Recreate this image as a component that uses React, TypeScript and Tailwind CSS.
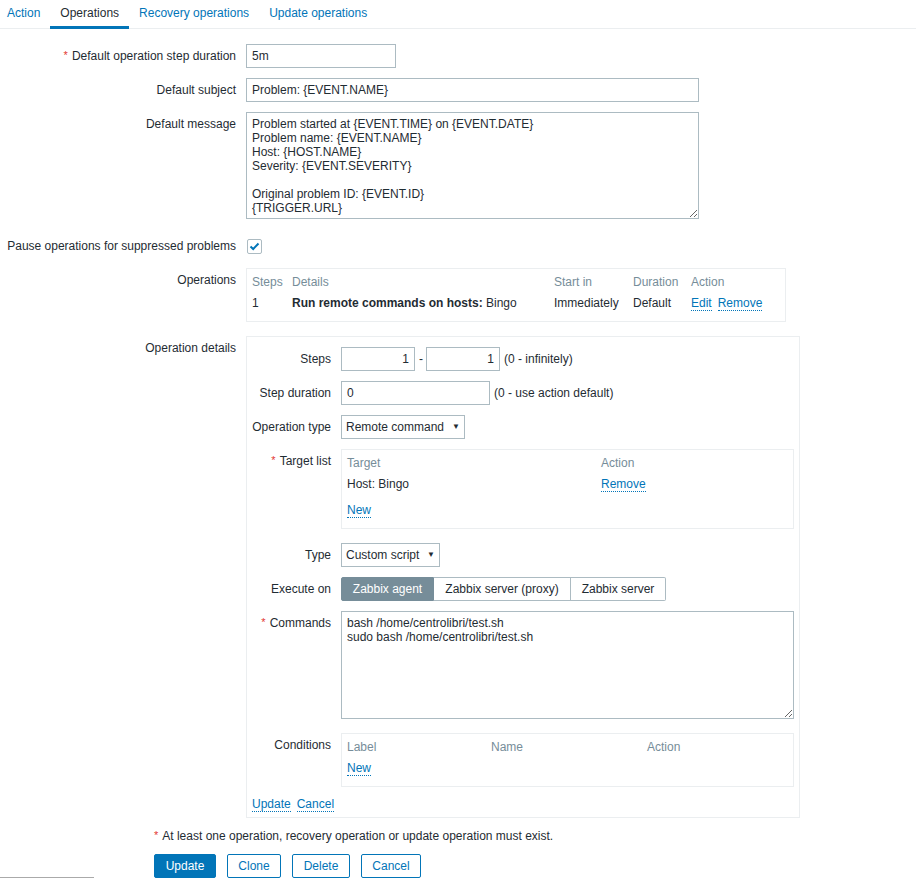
import React from "react";

const font = "font-['Liberation_Sans',Arial,sans-serif]";

function Req() {
  return <span className="text-[#e33734] mr-[4px] text-[11px] relative top-[-1px]">*</span>;
}

function Link({ children }: { children: React.ReactNode }) {
  return (
    <span className="text-[#0275b8] border-b border-dotted border-[#0275b8] leading-[14px] inline-block">
      {children}
    </span>
  );
}

function Row({
  label,
  req,
  width,
  className = "",
  children,
}: {
  label: string;
  req?: boolean;
  width: string;
  className?: string;
  children: React.ReactNode;
}) {
  return (
    <div className={`flex ${className}`}>
      <div className={`${width} shrink-0 text-right leading-[24px] whitespace-nowrap`}>
        {req && <Req />}
        {label}
      </div>
      <div className="ml-[10px] flex-1 min-w-0">{children}</div>
    </div>
  );
}

const inputCls =
  "h-[24px] border border-[#acbbc2] px-[5px] text-[12px] text-[#1f2c33] outline-none bg-white";

function Select({ text, w }: { text: string; w: string }) {
  return (
    <div className={`${w} h-[24px] border border-[#acbbc2] px-[4px] flex items-center justify-between`}>
      <span>{text}</span>
      <span className="text-[8px] text-[#1f2c33]">▼</span>
    </div>
  );
}

export default function App() {
  const msg =
    "Problem started at {EVENT.TIME} on {EVENT.DATE}\nProblem name: {EVENT.NAME}\nHost: {HOST.NAME}\nSeverity: {EVENT.SEVERITY}\n\nOriginal problem ID: {EVENT.ID}\n{TRIGGER.URL}";
  const cmds = "bash /home/centrolibri/test.sh\nsudo bash /home/centrolibri/test.sh";

  return (
    <div className={`${font} text-[12px] text-[#1f2c33] bg-white w-[916px] h-[878px] overflow-hidden`}>
      {/* TABS */}
      <div className="flex h-[29px] border-b border-[#ebeef0]">
        <div className="pl-[7px] pr-[10px] text-[#0275b8] leading-[26px]">Action</div>
        <div className="px-[10px] leading-[26px] border-b-[3px] border-[#0275b8] h-[29px]">Operations</div>
        <div className="px-[10px] text-[#0275b8] leading-[26px]">Recovery operations</div>
        <div className="px-[10px] text-[#0275b8] leading-[26px]">Update operations</div>
      </div>

      {/* FORM */}
      <div className="pt-[15px]">
        <Row label="Default operation step duration" req width="w-[236px]">
          <input readOnly value="5m" className={`${inputCls} w-[150px]`} />
        </Row>
        <Row label="Default subject" width="w-[236px]" className="mt-[10px]">
          <input readOnly value="Problem: {EVENT.NAME}" className={`${inputCls} w-[453px]`} />
        </Row>
        <Row label="Default message" width="w-[236px]" className="mt-[10px]">
          <textarea
            readOnly
            defaultValue={msg}
            className="block w-[453px] h-[107px] border border-[#acbbc2] px-[5px] py-[4px] text-[12px] leading-[14px] text-[#1f2c33] outline-none resize-y"
          />
        </Row>

        <div className="flex items-center mt-[15px] h-[24px]">
          <div className="w-[236px] text-right whitespace-nowrap">Pause operations for suppressed problems</div>
          <div className="ml-[11px] w-[15px] h-[15px] border border-[#acbbc2] rounded-[2px] flex items-center justify-center">
            <svg width="11" height="9" viewBox="0 0 11 9">
              <path d="M1.5 4.5 L4.2 7 L9.5 1.5" fill="none" stroke="#0275b8" strokeWidth="2" />
            </svg>
          </div>
        </div>

        {/* OPERATIONS */}
        <Row label="Operations" width="w-[236px]" className="mt-[10px]">
          <div className="w-[540px] h-[54px] border border-[#ebeef0] pt-[5px]">
            <div className="flex h-[16px] items-center text-[#768d99]">
              <div className="w-[40px] pl-[5px]">Steps</div>
              <div className="w-[262px] pl-[5px]">Details</div>
              <div className="w-[79px] pl-[5px]">Start in</div>
              <div className="w-[58px] pl-[5px]">Duration</div>
              <div className="pl-[5px]">Action</div>
            </div>
            <div className="flex h-[26px] items-center">
              <div className="w-[40px] pl-[5px]">1</div>
              <div className="w-[262px] pl-[5px]">
                <b>Run remote commands on hosts:</b> Bingo
              </div>
              <div className="w-[79px] pl-[5px]">Immediately</div>
              <div className="w-[58px] pl-[5px]">Default</div>
              <div className="pl-[5px] flex gap-[6px]">
                <Link>Edit</Link>
                <Link>Remove</Link>
              </div>
            </div>
          </div>
        </Row>

        {/* OPERATION DETAILS */}
        <Row label="Operation details" width="w-[236px]" className="mt-[14px]">
          <div className="w-[554px] h-[482px] border border-[#ebeef0] pt-[10px]">
            <Row label="Steps" width="w-[84px]">
              <div className="flex items-center">
                <input readOnly value="1" className={`${inputCls} w-[74px] text-right`} />
                <span className="ml-[4px] mr-[3px]">-</span>
                <input readOnly value="1" className={`${inputCls} w-[74px] text-right`} />
                <span className="ml-[4px]">(0 - infinitely)</span>
              </div>
            </Row>
            <Row label="Step duration" width="w-[84px]" className="mt-[10px]">
              <div className="flex items-center">
                <input readOnly value="0" className={`${inputCls} w-[149px]`} />
                <span className="ml-[4px]">(0 - use action default)</span>
              </div>
            </Row>
            <Row label="Operation type" width="w-[84px]" className="mt-[10px]">
              <Select text="Remote command" w="w-[124px]" />
            </Row>
            <Row label="Target list" req width="w-[84px]" className="mt-[10px]">
              <div className="w-[453px] h-[80px] border border-[#ebeef0] pt-[5px]">
                <div className="flex h-[16px] items-center text-[#768d99]">
                  <div className="w-[254px] pl-[5px]">Target</div>
                  <div className="pl-[5px]">Action</div>
                </div>
                <div className="flex h-[26px] items-center">
                  <div className="w-[254px] pl-[5px]">Host: Bingo</div>
                  <div className="pl-[5px]">
                    <Link>Remove</Link>
                  </div>
                </div>
                <div className="pl-[5px] pt-[4px]">
                  <Link>New</Link>
                </div>
              </div>
            </Row>
            <Row label="Type" width="w-[84px]" className="mt-[14px]">
              <Select text="Custom script" w="w-[99px]" />
            </Row>
            <Row label="Execute on" width="w-[84px]" className="mt-[10px]">
              <div className="flex h-[24px]">
                <div className="w-[93px] flex items-center justify-center bg-[#768d99] text-white border border-[#768d99] rounded-l-[2px]">
                  Zabbix agent
                </div>
                <div className="w-[137px] flex items-center justify-center border-y border-r border-[#acbbc2]">
                  Zabbix server (proxy)
                </div>
                <div className="w-[95px] flex items-center justify-center border-y border-r border-[#acbbc2] rounded-r-[2px]">
                  Zabbix server
                </div>
              </div>
            </Row>
            <Row label="Commands" req width="w-[84px]" className="mt-[10px]">
              <textarea
                readOnly
                defaultValue={cmds}
                className="block w-[453px] h-[108px] border border-[#acbbc2] px-[5px] py-[4px] text-[12px] leading-[14px] text-[#1f2c33] outline-none resize-y"
              />
            </Row>
            <Row label="Conditions" width="w-[84px]" className="mt-[14px]">
              <div className="w-[453px] h-[54px] border border-[#ebeef0] pt-[5px]">
                <div className="flex h-[16px] items-center text-[#768d99]">
                  <div className="w-[144px] pl-[5px]">Label</div>
                  <div className="w-[156px] pl-[5px]">Name</div>
                  <div className="pl-[5px]">Action</div>
                </div>
                <div className="flex h-[26px] items-center pl-[5px]">
                  <Link>New</Link>
                </div>
              </div>
            </Row>
            <div className="mt-[10px] pl-[5px] flex gap-[6px]">
              <Link>Update</Link>
              <Link>Cancel</Link>
            </div>
          </div>
        </Row>

        {/* NOTE */}
        <div className="ml-[154px] mt-[11px] leading-[14px]">
          <Req />
          At least one operation, recovery operation or update operation must exist.
        </div>

        {/* BUTTONS */}
        <div className="ml-[154px] mt-[11px] flex gap-[11px]">
          <button className="w-[62px] h-[24px] bg-[#0275b8] text-white rounded-[2px] border border-[#0275b8]">Update</button>
          <button className="w-[54px] h-[24px] text-[#0275b8] rounded-[2px] border border-[#0275b8]">Clone</button>
          <button className="w-[58px] h-[24px] text-[#0275b8] rounded-[2px] border border-[#0275b8]">Delete</button>
          <button className="w-[60px] h-[24px] text-[#0275b8] rounded-[2px] border border-[#0275b8]">Cancel</button>
        </div>
        <div className="w-[94px] h-[20px] border border-[#aaaaaa] mt-[-1px]"></div>
      </div>
    </div>
  );
}
